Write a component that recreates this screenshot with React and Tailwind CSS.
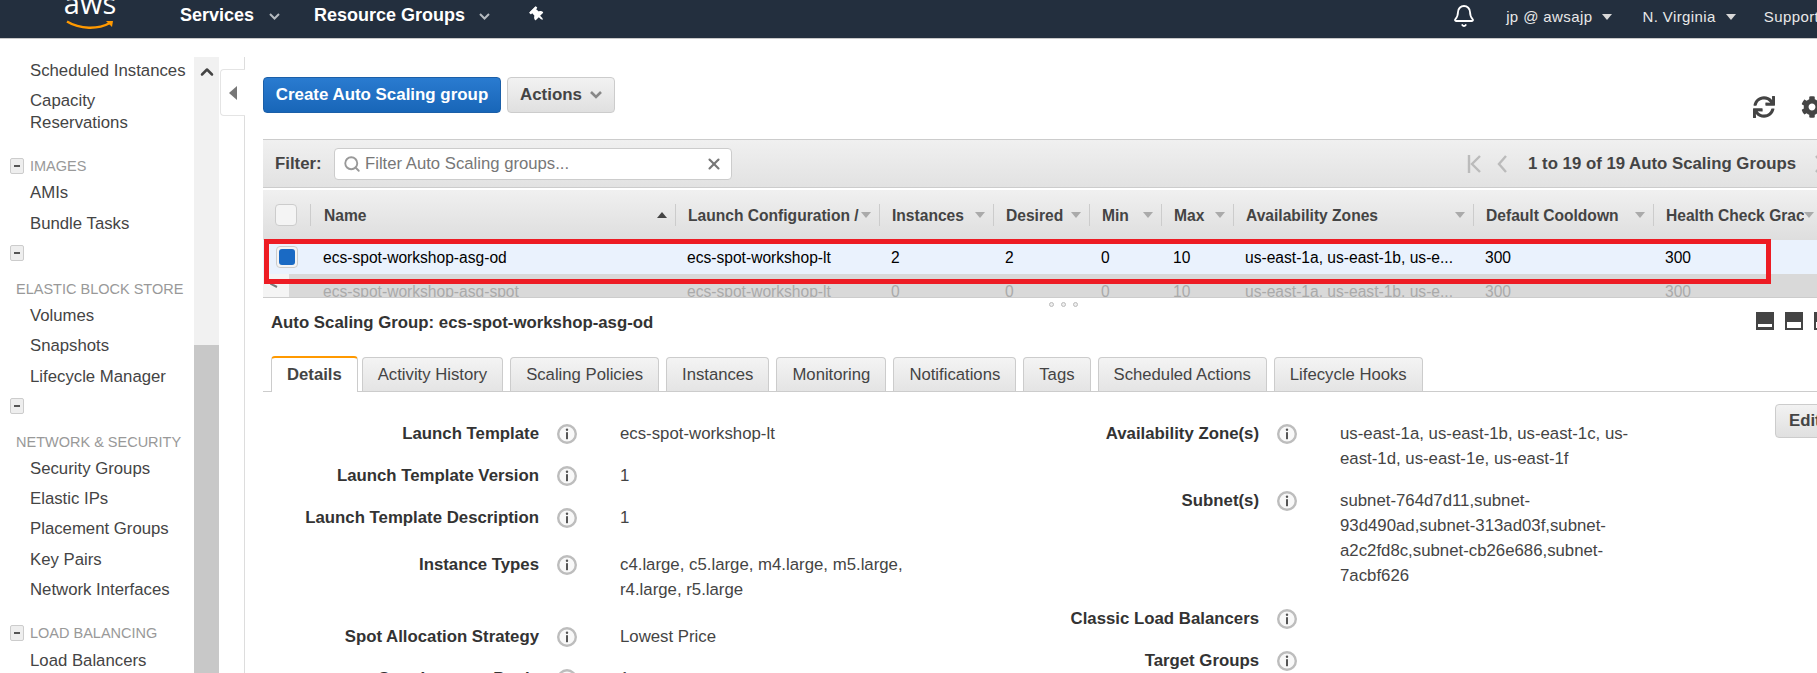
import React from 'react';
import { Bell, ChevronUp, Search, X } from 'lucide-react';
import { FaCog, FaSync, FaThumbtack } from 'react-icons/fa';

const sideItems = [
    { label: 'Scheduled Instances', cls: 'mt-0' },
    { label: 'Capacity Reservations', cls: 'mt-[8px]' },
    { head: 'IMAGES', cls: 'mt-[21px]' },
    { label: 'AMIs', cls: 'mt-[5px]' },
    { label: 'Bundle Tasks', cls: 'mt-[9px]' },
    { head: '', cls: 'mt-[7px]' },
    { sub: 'ELASTIC BLOCK STORE', cls: 'mt-[14px]' },
    { label: 'Volumes', cls: 'mt-[5px]' },
    { label: 'Snapshots', cls: 'mt-[8px]' },
    { label: 'Lifecycle Manager', cls: 'mt-[9px]' },
    { head: '', cls: 'mt-[7px]' },
    { sub: 'NETWORK & SECURITY', cls: 'mt-[14px]' },
    { label: 'Security Groups', cls: 'mt-[5px]' },
    { label: 'Elastic IPs', cls: 'mt-[8px]' },
    { label: 'Placement Groups', cls: 'mt-[8px]' },
    { label: 'Key Pairs', cls: 'mt-[9px]' },
    { label: 'Network Interfaces', cls: 'mt-[8px]' },
    { head: 'LOAD BALANCING', cls: 'mt-[21px]' },
    { label: 'Load Balancers', cls: 'mt-[6px]' },
];

const columns = 'grid grid-cols-[47px_365px_204px_114px_96px_72px_72px_240px_180px_164px]';

const headers = [
    'Name',
    'Launch Configuration /',
    'Instances',
    'Desired',
    'Min',
    'Max',
    'Availability Zones',
    'Default Cooldown',
    'Health Check Grace Period',
];

const tabs = ['Activity History', 'Scaling Policies', 'Instances', 'Monitoring', 'Notifications', 'Tags', 'Scheduled Actions', 'Lifecycle Hooks'];

const leftRows = [
    { label: 'Launch Template', value: 'ecs-spot-workshop-lt', cls: 'mt-0' },
    { label: 'Launch Template Version', value: '1', cls: 'mt-[17px]' },
    { label: 'Launch Template Description', value: '1', cls: 'mt-[17px]' },
    { label: 'Instance Types', value: 'c4.large, c5.large, m4.large, m5.large, r4.large, r5.large', cls: 'mt-[22px]' },
    { label: 'Spot Allocation Strategy', value: 'Lowest Price', cls: 'mt-[22px]' },
    { label: 'Spot Instance Pools', value: '1', cls: 'mt-[17px]' },
];

const rightRows = [
    { label: 'Availability Zone(s)', value: 'us-east-1a, us-east-1b, us-east-1c, us-east-1d, us-east-1e, us-east-1f', cls: 'mt-0' },
    { label: 'Subnet(s)', value: 'subnet-764d7d11,subnet-93d490ad,subnet-313ad03f,subnet-a2c2fd8c,subnet-cb26e686,subnet-7acbf626', cls: 'mt-[17px]' },
    { label: 'Classic Load Balancers', value: '', cls: 'mt-[18px]' },
    { label: 'Target Groups', value: '', cls: 'mt-[17px]' },
];

const Caret = ({ className = 'fill-[#aaa]' }) => (
    <svg width="10" height="6" viewBox="0 0 10 6" className={`shrink-0 ${className}`}>
        <polygon points="0,0 10,0 5,6" />
    </svg>
);

const NavChevron = () => (
    <svg width="11" height="7" viewBox="0 0 11 7" fill="none" className="stroke-[#b5bac0] stroke-2">
        <polyline points="1,1 5.5,5.5 10,1" />
    </svg>
);

const MinusBox = () => (
    <span className="flex h-[16px] w-[14px] items-center justify-center rounded-[2px] border border-[#ccc] bg-[#eee]">
        <span className="h-[2px] w-[6px] bg-[#555]" />
    </span>
);

const InfoIcon = () => (
    <svg width="20" height="20" viewBox="0 0 20 20">
        <circle cx="10" cy="10" r="8.8" fill="#f8f8f8" stroke="#bdbdbd" strokeWidth="2.4" />
        <circle cx="10" cy="5.8" r="1.2" fill="#555" />
        <rect x="9" y="8.2" width="2" height="7" fill="#555" />
    </svg>
);

const PaneIcon = ({ bar }) => (
    <svg width="18" height="18" viewBox="0 0 18 18" className="shrink-0">
        <rect width="18" height="18" fill="#444" />
        <rect x="2" y={bar === 'thin' ? 12 : 10} width="14" height={bar === 'thin' ? 3 : 6} fill="#fff" />
    </svg>
);

const DetailRow = ({ row, cols }) => (
    <div className={`grid ${cols} text-[16.8px] leading-[25px] ${row.cls}`}>
        <div className="text-right font-bold text-[#333]">{row.label}</div>
        <div className="flex h-[25px] items-center pl-[18px]">
            <InfoIcon />
        </div>
        <div className="text-[#444]">{row.value}</div>
    </div>
);

const App = () => {
    return (
        <div className="relative h-[673px] w-[1817px] overflow-hidden bg-white font-['Liberation_Sans',Arial,sans-serif]">
            {/* Top nav */}
            <nav className="flex h-[39px] items-center overflow-hidden whitespace-nowrap border-b border-[#c8c8c8] bg-[#232f3e] text-white [&>*]:shrink-0">
                <div className="ml-[65px] flex h-[38px] w-[50px] flex-col items-center overflow-visible">
                    <span className="-mt-[14px] font-['Open_Sans',sans-serif] text-[29px] leading-[34px] text-white">aws</span>
                    <svg width="48" height="10" viewBox="0 0 48 10" fill="none">
                        <path d="M1 1.5 C14 9.5 32 9.5 44 3" stroke="#f90" strokeWidth="2.4" />
                        <path d="M40 1 L47 1 L46 7 Z" fill="#f90" />
                    </svg>
                </div>
                <span className="-mt-[8px] ml-[65px] text-[18px] font-bold">Services</span>
                <span className="-mt-[6px] ml-[15px]"><NavChevron /></span>
                <span className="-mt-[8px] ml-[34px] text-[18px] font-bold">Resource Groups</span>
                <span className="-mt-[6px] ml-[14px]"><NavChevron /></span>
                <FaThumbtack size={15} className="-mt-[9px] ml-[40px] -rotate-45 text-white" />
                <Bell size={24} strokeWidth={1.8} className="-mt-[6px] ml-[907px] text-white" />
                <span className="-mt-[3px] ml-[30px] text-[15px] tracking-[0.4px] text-[#e8e8e8]">jp @ awsajp</span>
                <span className="-mt-[4px] ml-[10px]"><Caret className="fill-[#d8d8d8]" /></span>
                <span className="-mt-[3px] ml-[30px] text-[15px] tracking-[0.4px] text-[#e8e8e8]">N. Virginia</span>
                <span className="-mt-[4px] ml-[10px]"><Caret className="fill-[#d8d8d8]" /></span>
                <span className="-mt-[3px] ml-[28px] text-[15px] tracking-[0.4px] text-[#e8e8e8]">Support</span>
            </nav>

            <div className="flex h-[634px]">
                {/* Side menu */}
                <aside className="w-[194px] shrink-0 overflow-hidden pt-[21px] text-[16.75px] leading-[22px] text-[#444]">
                    {sideItems.map((item, i) => {
                        if (item.label) {
                            return <div key={i} className={`pl-[30px] pr-[6px] ${item.cls}`}>{item.label}</div>;
                        }
                        if (item.sub) {
                            return <div key={i} className={`whitespace-nowrap pl-[16px] text-[14.5px] text-[#999] ${item.cls}`}>{item.sub}</div>;
                        }
                        return (
                            <div key={i} className={`flex h-[22px] items-center gap-[6px] pl-[10px] text-[14.5px] text-[#999] ${item.cls}`}>
                                <MinusBox />
                                {item.head}
                            </div>
                        );
                    })}
                </aside>
                <div className="mt-[18px] flex w-[25px] shrink-0 flex-col bg-[#c8c8c8]">
                    <div className="flex h-[288px] justify-center bg-[#f1f1f1] pt-[5px]">
                        <ChevronUp size={20} strokeWidth={3} className="text-[#444]" />
                    </div>
                </div>
                <div className="mt-[18px] w-[26px] shrink-0 border-r border-[#ddd]">
                    <div className="-mr-px ml-[1px] mt-[12px] flex h-[47px] items-center justify-center rounded-l-[4px] border border-r-0 border-[#e4e4e4] bg-white">
                        <svg width="8" height="14" viewBox="0 0 8 14"><polygon points="8,0 8,14 0,7" fill="#777" /></svg>
                    </div>
                </div>

                {/* Main panel */}
                <main className="min-w-0 flex-1 overflow-hidden pl-[18px] pt-[38px]">
                    <div className="flex h-[36px] items-start">
                        <button className="h-[36px] w-[238px] rounded-[4px] border border-[#1b5fa8] bg-gradient-to-b from-[#2a7bd0] to-[#1866b8] text-[16.9px] font-bold text-white">
                            Create Auto Scaling group
                        </button>
                        <button className="ml-[6px] flex h-[36px] w-[108px] items-center justify-center gap-[8px] rounded-[4px] border border-[#ccc] bg-gradient-to-b from-[#f2f2f2] to-[#e0e0e0] text-[16.9px] font-bold text-[#444]">
                            Actions
                            <svg width="12" height="8" viewBox="0 0 12 8" fill="none" stroke="#888" strokeWidth="2.6"><polyline points="1,1 6,6 11,1" /></svg>
                        </button>
                        <div className="-mr-[6px] ml-auto mt-[19px] flex items-center gap-[26px] text-[#444]">
                            <FaSync size={22} />
                            <FaCog size={22} />
                        </div>
                    </div>

                    {/* Filter bar */}
                    <div className="mt-[26px] flex h-[49px] items-center border-y border-[#ccc] bg-gradient-to-b from-[#f0f0f0] to-[#e2e2e2] pl-[12px]">
                        <span className="w-[59px] pt-px text-[16.8px] font-bold text-[#444]">Filter:</span>
                        <div className="flex h-[32px] w-[398px] items-center rounded-[4px] border border-[#ccc] bg-white pl-[8px] pr-[8px] text-[16.7px] text-[#777]">
                            <Search size={18} strokeWidth={2.5} className="mr-[4px] shrink-0 text-[#999]" />
                            <span className="flex-1 pt-px">Filter Auto Scaling groups...</span>
                            <X size={18} strokeWidth={2.8} className="text-[#777]" />
                        </div>
                        <div className="-mr-[6px] ml-auto flex items-center text-[16.8px] font-bold text-[#444]">
                            <svg width="14" height="18" viewBox="0 0 14 18" fill="none" stroke="#bbb" strokeWidth="2.4">
                                <path d="M2 0V18M13 1L5 9L13 17" />
                            </svg>
                            <svg width="10" height="18" viewBox="0 0 10 18" fill="none" stroke="#bbb" strokeWidth="2.4" className="ml-[16px]">
                                <path d="M9 1L2 9L9 17" />
                            </svg>
                            <span className="ml-[21px] whitespace-nowrap pt-px">1 to 19 of 19 Auto Scaling Groups</span>
                            <svg width="8" height="18" viewBox="0 0 8 18" fill="none" stroke="#bbb" strokeWidth="2.4" className="ml-[19px] shrink-0">
                                <path d="M1 1L8 9L1 17" />
                            </svg>
                        </div>
                    </div>

                    {/* Table */}
                    <div className={`${columns} mt-[2px] h-[50px] items-center bg-gradient-to-b from-[#f0f0f0] to-[#dedede] text-[15.6px] font-bold text-[#444]`}>
                        <div className="pl-[12px]">
                            <div className="h-[22px] w-[22px] rounded-[4px] border border-[#ccc] bg-[#f4f4f4]" />
                        </div>
                        {headers.map((h, i) => (
                            <div key={h} className={`flex h-[22px] items-center border-l border-[#ccc] ${i === 0 ? 'pl-[13px]' : 'pl-[12px]'} ${i === 8 ? 'pr-[3px]' : 'pr-[8px]'}`}>
                                <span className="flex-1 overflow-hidden whitespace-nowrap pt-px">{h}</span>
                                {i === 0 ? (
                                    <svg width="10" height="6" viewBox="0 0 10 6" className="fill-[#444]"><polygon points="0,6 10,6 5,0" /></svg>
                                ) : (
                                    <Caret />
                                )}
                            </div>
                        ))}
                    </div>
                    <div className={`${columns} h-[34px] items-center bg-[#eaf2fd] text-[15.6px] text-black`}>
                        <div className="pl-[13px]">
                            <div className="flex h-[22px] w-[22px] items-center justify-center rounded-[4px] border border-[#ccc] bg-[#f4f4f4]">
                                <div className="h-[16px] w-[16px] rounded-[3px] bg-[#1a6ac4]" />
                            </div>
                        </div>
                        {['ecs-spot-workshop-asg-od', 'ecs-spot-workshop-lt', '2', '2', '0', '10', 'us-east-1a, us-east-1b, us-e...', '300', '300'].map((v, i) => (
                            <div key={i} className={`whitespace-nowrap pt-px ${i === 0 ? 'pl-[13px]' : 'pl-[12px]'}`}>{v}</div>
                        ))}
                    </div>
                    <div className="h-[24px] overflow-hidden border-b border-[#ccc]">
                        <div className={`${columns} h-[34px] items-center bg-[#d9d9d9] text-[15.6px] text-[#aaa]`}>
                            <div className="flex h-[34px] self-start">
                                <div className="flex h-[34px] w-[26px] justify-center bg-[#f4f4f4] pr-[4px] pt-[6px]">
                                    <svg width="8" height="8" viewBox="0 0 8 8" fill="none" stroke="#777" strokeWidth="2"><path d="M7 1L1 4L7 7" /></svg>
                                </div>
                            </div>
                            {['ecs-spot-workshop-asg-spot', 'ecs-spot-workshop-lt', '0', '0', '0', '10', 'us-east-1a, us-east-1b, us-e...', '300', '300'].map((v, i) => (
                                <div key={i} className={`whitespace-nowrap pt-px ${i === 0 ? 'pl-[13px]' : 'pl-[12px]'}`}>{v}</div>
                            ))}
                        </div>
                    </div>

                    {/* Resize handle */}
                    <div className="flex h-[12px] items-center gap-[7px] pl-[786px]">
                        <span className="h-[5px] w-[5px] rounded-full border border-[#bbb] bg-[#eee]" />
                        <span className="h-[5px] w-[5px] rounded-full border border-[#bbb] bg-[#eee]" />
                        <span className="h-[5px] w-[5px] rounded-full border border-[#bbb] bg-[#eee]" />
                    </div>

                    {/* Detail header */}
                    <div className="mt-[2px] flex h-[22px] items-center justify-between pl-[8px]">
                        <span className="text-[16.8px] font-bold text-[#333]">Auto Scaling Group: ecs-spot-workshop-asg-od</span>
                        <div className="-mr-[15px] -mt-[4px] flex gap-[11px]">
                            <PaneIcon bar="thin" />
                            <PaneIcon bar="wide" />
                            <PaneIcon bar="wide" />
                        </div>
                    </div>

                    {/* Tabs */}
                    <div className="mt-[22px] flex h-[36px] items-end gap-[7px] border-b border-[#ccc] pl-[8px] text-[16.7px]">
                        <div className="-mb-px -mr-[3px] flex h-[36px] items-center rounded-t-[4px] border border-b-0 border-[#ccc] border-t-[#f90] bg-white px-[15px] font-bold text-[#444] [border-top-width:2px]">
                            Details
                        </div>
                        {tabs.map((t) => (
                            <div key={t} className="flex h-[34px] items-center rounded-t-[4px] border border-b-0 border-[#ccc] bg-gradient-to-b from-[#f4f4f4] to-[#e4e4e4] px-[15px] text-[#444]">
                                {t}
                            </div>
                        ))}
                    </div>

                    {/* Detail fields */}
                    <div className="flex">
                        <div className="w-[737px] shrink-0 pt-[29px]">
                            {leftRows.map((r) => <DetailRow key={r.label} row={r} cols="grid-cols-[276px_81px_300px]" />)}
                        </div>
                        <div className="w-[775px] shrink-0 pt-[29px]">
                            {rightRows.map((r) => <DetailRow key={r.label} row={r} cols="grid-cols-[259px_81px_300px]" />)}
                        </div>
                        <button className="mt-[12px] h-[34px] w-[70px] shrink-0 rounded-[4px] border border-[#ccc] bg-gradient-to-b from-[#f2f2f2] to-[#e0e0e0] pl-[13px] text-left text-[16.8px] font-bold text-[#444]">
                            Edit
                        </button>
                    </div>
                </main>
            </div>

            {/* Red annotation box */}
            <div className="pointer-events-none absolute left-[264px] top-[239px] h-[45px] w-[1507px] border-[5px] border-[#ed1c24]" />
        </div>
    );
};

export default App;
